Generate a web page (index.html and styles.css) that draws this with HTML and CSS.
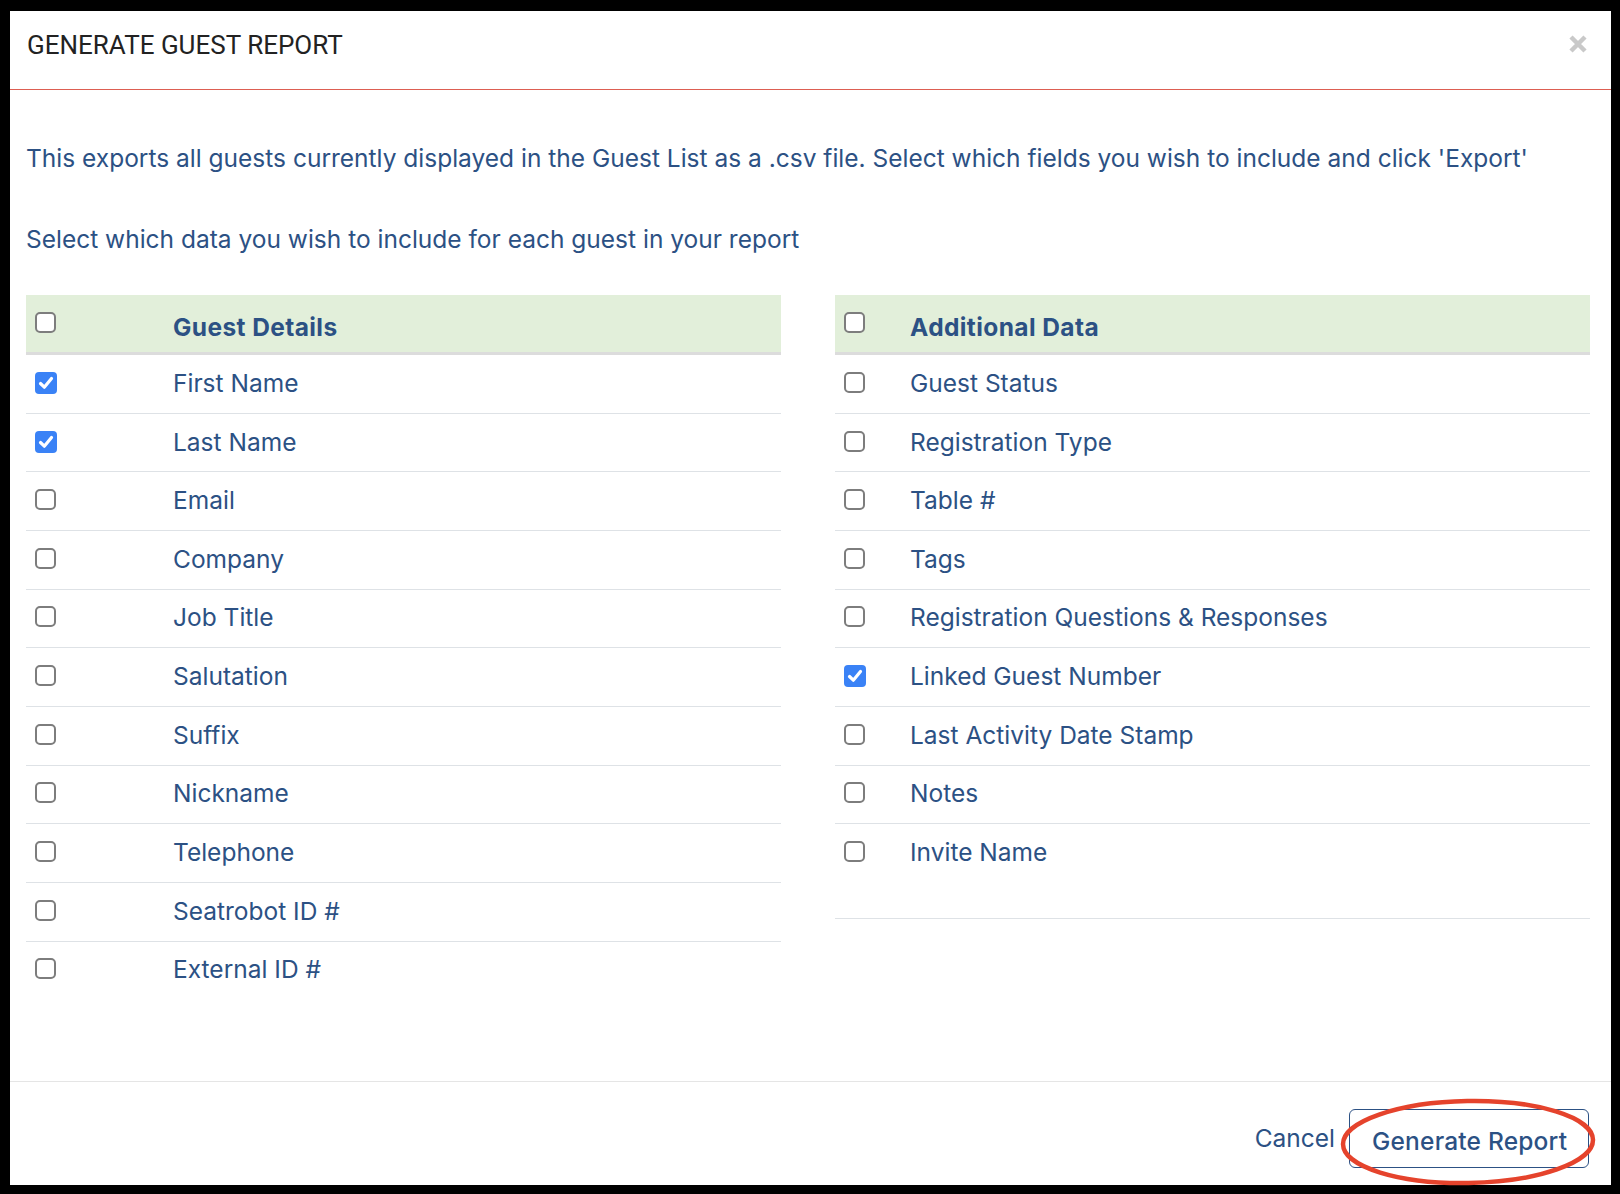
FILE: index.html
```html
<!DOCTYPE html>
<html lang="en">
<head>
  <meta charset="UTF-8">
  <meta name="viewport" content="width=device-width, initial-scale=1.0">
  <title>Generate Guest Report</title>
  <link rel="stylesheet" href="styles.css">
</head>
<body>
  <div class="modal">
    <div class="modal-header">
      <h4 class="modal-title">GENERATE GUEST REPORT</h4>
      <button class="close-btn" aria-label="Close">
        <svg width="20" height="20" viewBox="0 0 20 20"><path d="M3 3 L17 17 M17 3 L3 17" stroke="#c9c9c9" stroke-width="4.5" stroke-linecap="butt"/></svg>
      </button>
    </div>

    <div class="modal-body">
      <p class="intro first">This exports all guests currently displayed in the Guest List as a .csv file. Select which fields you wish to include and click 'Export'</p>
      <p class="intro">Select which data you wish to include for each guest in your report</p>

      <div class="field-tables">
        <div class="field-table guest-details">
          <div class="field-row head"><span class="check-cell"><span class="box"></span></span><span class="label">Guest Details</span></div>
          <div class="field-row"><span class="check-cell"><span class="box checked"><svg viewBox="0 0 22 22"><path d="M5.5 11.5 L9.3 15.2 L16.5 6.5" /></svg></span></span><span class="label">First Name</span></div>
          <div class="field-row"><span class="check-cell"><span class="box checked"><svg viewBox="0 0 22 22"><path d="M5.5 11.5 L9.3 15.2 L16.5 6.5" /></svg></span></span><span class="label">Last Name</span></div>
          <div class="field-row"><span class="check-cell"><span class="box"></span></span><span class="label">Email</span></div>
          <div class="field-row"><span class="check-cell"><span class="box"></span></span><span class="label">Company</span></div>
          <div class="field-row"><span class="check-cell"><span class="box"></span></span><span class="label">Job Title</span></div>
          <div class="field-row"><span class="check-cell"><span class="box"></span></span><span class="label">Salutation</span></div>
          <div class="field-row"><span class="check-cell"><span class="box"></span></span><span class="label">Suffix</span></div>
          <div class="field-row"><span class="check-cell"><span class="box"></span></span><span class="label">Nickname</span></div>
          <div class="field-row"><span class="check-cell"><span class="box"></span></span><span class="label">Telephone</span></div>
          <div class="field-row"><span class="check-cell"><span class="box"></span></span><span class="label">Seatrobot ID #</span></div>
          <div class="field-row"><span class="check-cell"><span class="box"></span></span><span class="label">External ID #</span></div>
        </div>

        <div class="field-table additional-data">
          <div class="field-row head"><span class="check-cell"><span class="box"></span></span><span class="label">Additional Data</span></div>
          <div class="field-row"><span class="check-cell"><span class="box"></span></span><span class="label">Guest Status</span></div>
          <div class="field-row"><span class="check-cell"><span class="box"></span></span><span class="label">Registration Type</span></div>
          <div class="field-row"><span class="check-cell"><span class="box"></span></span><span class="label">Table #</span></div>
          <div class="field-row"><span class="check-cell"><span class="box"></span></span><span class="label">Tags</span></div>
          <div class="field-row"><span class="check-cell"><span class="box"></span></span><span class="label">Registration Questions &amp; Responses</span></div>
          <div class="field-row"><span class="check-cell"><span class="box checked"><svg viewBox="0 0 22 22"><path d="M5.5 11.5 L9.3 15.2 L16.5 6.5" /></svg></span></span><span class="label">Linked Guest Number</span></div>
          <div class="field-row"><span class="check-cell"><span class="box"></span></span><span class="label">Last Activity Date Stamp</span></div>
          <div class="field-row"><span class="check-cell"><span class="box"></span></span><span class="label">Notes</span></div>
          <div class="field-row tall"><span class="check-cell"><span class="box"></span></span><span class="label">Invite Name</span></div>
          <div class="field-row blank"></div>
        </div>
      </div>
    </div>

    <div class="modal-footer">
      <button class="cancel-btn">Cancel</button>
      <div class="generate-wrap">
        <button class="generate-btn">Generate Report</button>
        <svg class="highlight" width="290" height="96" viewBox="0 0 290 96">
          <ellipse cx="139" cy="48" rx="125" ry="41" transform="rotate(-1 139 48)" fill="none" stroke="#e5432c" stroke-width="4.5"/>
        </svg>
      </div>
    </div>
  </div>
</body>
</html>
```

FILE: styles.css
```css
body {
  margin: 0; background: #000; font-family: Inter, "Noto Sans", sans-serif; }
.modal {
  margin: 11px 9px 9px 10px; height: 1174px; background: #fff;
  display: flex; flex-direction: column; }

.modal-header {
  height: 78px; border-bottom: 1px solid #dd5e52; display: flex;
  justify-content: space-between; align-items: flex-start;
  padding: 0 23px 0 17px; box-sizing: content-box; }
.modal-title {
  margin: 18.6px 0 0; font-family: Roboto, sans-serif; font-weight: 400;
  font-size: 26px; line-height: 30px; color: #222; }
.close-btn {
  margin-top: 23px; padding: 0; border: none; background: none; width: 20px; height: 20px; cursor: pointer; }
.close-btn svg { display: block; }

.modal-body {
  flex: 1; padding: 0 21px 0 16px; }
.intro {
  margin: 53px 0 0; font-size: 24.5px; line-height: 28.8px; color: #2c5184; }
.intro.first { margin-top: 53.6px; }

.field-tables {
  display: grid; grid-template-columns: 755px 755px; column-gap: 54px; margin-top: 40.9px; }

.field-row {
  display: flex; align-items: flex-start; box-sizing: border-box;
  height: 58.67px; padding-top: 13.8px; border-top: 1px solid #dee2e6;
  font-size: 24.5px; line-height: 28.8px; color: #2c5184; }
.field-row.head {
  box-sizing: content-box; height: 38.7px; padding-top: 18.3px; border-top: none;
  border-bottom: 3px solid #dcdcdc; background: #e2efda; font-weight: 700; letter-spacing: 0.4px; }
.field-row.head + .field-row { border-top: none; height: 57.67px; }
.field-row.tall { height: 94.7px; }
.field-row.blank { height: 1px; padding: 0; }

.check-cell { padding-left: 9px; box-sizing: border-box; flex: none; }
.guest-details .check-cell { width: 147px; }
.additional-data .check-cell { width: 75px; }

.box {
  display: block; width: 21px; height: 21px; margin-top: 3px; box-sizing: border-box;
  border: 2px solid #7d7d7d; border-radius: 5px; background: #fff; }
.head .box { margin-top: -1.3px; }
.box.checked {
  width: 22px; height: 22px; border: none; background: #3a82f6; border-radius: 4px; }
.box.checked svg { display: block; width: 22px; height: 22px; }
.box.checked path { fill: none; stroke: #fff; stroke-width: 3.2; stroke-linecap: round; stroke-linejoin: round; }

.modal-footer {
  border-top: 1px solid #e5e5e5; height: 104px; box-sizing: border-box; display: flex;
  justify-content: flex-end; align-items: flex-start; padding: 27px 22px 0 0; }
.cancel-btn {
  margin: 15.3px 14px 0 0; padding: 0; border: none; background: none; cursor: pointer;
  font-family: Inter, sans-serif; font-size: 24.5px; line-height: 28.8px; color: #2c5184; }
.generate-wrap { position: relative; }
.generate-btn {
  display: block; width: 240px; height: 59px; box-sizing: border-box; padding: 17px 0 11px 22px;
  text-align: left; border: 1px solid #2c5184; border-radius: 6px; background: #fff; cursor: pointer;
  font-family: Inter, sans-serif; font-weight: 500; font-size: 24.5px; line-height: 28.8px;
  letter-spacing: 0.2px; color: #2c5184; }
.highlight {
  position: absolute; left: -20px; top: -15px; pointer-events: none; }
```
